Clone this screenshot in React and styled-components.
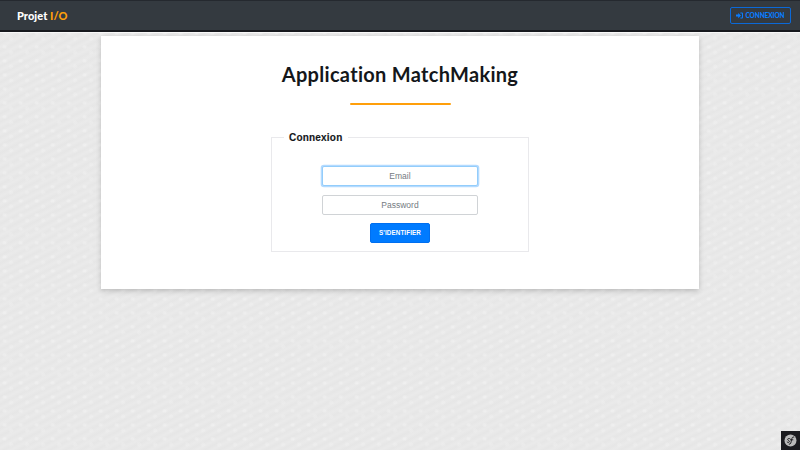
import React from "react";
import styled, { createGlobalStyle, css } from "styled-components";

const GlobalStyle = createGlobalStyle`
  * { box-sizing: border-box; }
  body {
    margin: 0;
    overflow: hidden;
    font-family: "Liberation Sans", Arial, sans-serif;
    color: #14171a;
  }
`;

const Page = styled.div`
  display: flex;
  flex-direction: column;
  align-items: center;
  height: 450px;
  background:
    repeating-linear-gradient(153deg, rgba(255, 255, 255, 0.1) 0, rgba(0, 0, 0, 0.008) 3.5px, rgba(255, 255, 255, 0.1) 7px),
    radial-gradient(ellipse at 30% 35%, rgba(255, 255, 255, 0.26) 0 1px, transparent 3px) 0 0 / 16px 14px,
    radial-gradient(ellipse at 70% 75%, rgba(255, 255, 255, 0.18) 0 1px, transparent 3px) 0 0 / 16px 14px,
    #e8e8e8;
`;

const Navbar = styled.header`
  display: flex;
  flex: none;
  align-items: center;
  justify-content: space-between;
  width: 100%;
  height: 32px;
  padding: 0 9px 0 17px;
  background: #343a40;
  border-top: 1px solid #25292f;
  border-bottom: 2px solid #17191e;
  box-shadow: 0 1px 0 #f8f8f8;
`;

const Brand = styled.div`
  font: 900 11px/16px Lato, sans-serif;
  letter-spacing: 0.05px;
  color: #fff;
  white-space: nowrap;
`;

const Accent = styled.span`
  color: #ff9f0a;
`;

const LoginLink = styled.button`
  display: flex;
  align-items: center;
  justify-content: center;
  gap: 2px;
  width: 61px;
  height: 17px;
  padding: 0;
  border: 1px solid #0b69d8;
  border-radius: 2px;
  background: transparent;
  color: #087cff;
  font: 900 6.5px/10px Lato, sans-serif;
  letter-spacing: -0.1px;
`;

const Card = styled.main`
  display: flex;
  flex: none;
  flex-direction: column;
  align-items: center;
  width: 598px;
  height: 253px;
  margin-top: 4px;
  padding-top: 24px;
  background: #fff;
  box-shadow: 0 2px 5px rgba(0, 0, 0, 0.2);
`;

const Title = styled.h1`
  margin: 0;
  font: 700 20px/28px Lato, sans-serif;
  letter-spacing: 0.3px;
  white-space: nowrap;
`;

const Rule = styled.div`
  width: 101px;
  height: 2px;
  margin-top: 15px;
  background: #ff9f0a;
  border-radius: 1px;
`;

const Fieldset = styled.fieldset`
  display: flex;
  flex-direction: column;
  align-items: center;
  width: 258px;
  height: 122px;
  margin: 25px 0 0;
  padding: 22px 0 0;
  border: 1px solid #e9e9ec;
`;

const Legend = styled.legend`
  margin-left: 12px;
  padding: 2px 6px 0 5px;
  font-size: 10px;
  font-weight: 700;
  line-height: 12px;
  letter-spacing: 0.2px;
  -webkit-text-stroke: 0.15px currentColor;
`;

const Field = styled.input`
  width: 156px;
  height: 20px;
  margin: 0 0 9px;
  padding: 0 6px;
  border: 1px solid #d0d3d6;
  border-radius: 2px;
  outline: none;
  background: #fff;
  color: #495057;
  font: 8.5px/12px "Liberation Sans", Arial, sans-serif;
  text-align: center;
  &::placeholder { color: #747b82; opacity: 1; }
  ${({ $active }) => $active && css`
    border-color: #93cdfb;
    box-shadow: 0 0 0 1.3px #b3daff;
  `}
`;

const Submit = styled.button`
  width: 60px;
  height: 20px;
  margin-top: -1px;
  padding: 0 0 1px;
  border: 1px solid #006ff0;
  border-radius: 2px;
  background: #007bff;
  color: #fff;
  font: 700 6.3px/10px "Liberation Sans", Arial, sans-serif;
  letter-spacing: 0.1px;
`;

const DebugBadge = styled.div`
  position: fixed;
  right: 0;
  bottom: 0;
  display: flex;
  align-items: center;
  justify-content: center;
  width: 19px;
  height: 19px;
  background: #1b1b1f;
`;

const LoginIcon = () => (
  <svg width="7" height="7" viewBox="0 0 12 12" fill="currentColor">
    <path d="M0 4.2h3.8V1.5L8.5 6l-4.7 4.5V7.8H0z" />
    <path d="M7.5 1h3a1.5 1.5 0 0 1 1.5 1.5v7a1.5 1.5 0 0 1-1.5 1.5h-3V9.5h2.7v-7H7.5z" />
  </svg>
);

const SymfonyIcon = () => (
  <svg width="13" height="13" viewBox="0 0 26 26" fill="none">
    <circle cx="13" cy="13" r="12" fill="#bababa" />
    <path
      d="M12.2 9.5C10.6 8 7 9 7.3 11.2c.3 1.8 3.8 1.6 3.5 4-.3 2-3.6 2.3-4.6.7M10.4 20.5c3.3.6 3.8-4.1 4.6-8.3.8-4.1 1.8-7.5 4.6-6.2M12.8 11.6h5"
      stroke="#202024"
      strokeWidth="2"
      strokeLinecap="round"
    />
  </svg>
);

export default function App() {
  return (
    <>
      <GlobalStyle />
      <Page>
        <Navbar>
          <Brand>Projet <Accent>I/O</Accent></Brand>
          <LoginLink><LoginIcon />CONNEXION</LoginLink>
        </Navbar>
        <Card>
          <Title>Application MatchMaking</Title>
          <Rule />
          <Fieldset>
            <Legend>Connexion</Legend>
            <Field $active type="email" placeholder="Email" />
            <Field type="password" placeholder="Password" />
            <Submit>S'IDENTIFIER</Submit>
          </Fieldset>
        </Card>
        <DebugBadge><SymfonyIcon /></DebugBadge>
      </Page>
    </>
  );
}
